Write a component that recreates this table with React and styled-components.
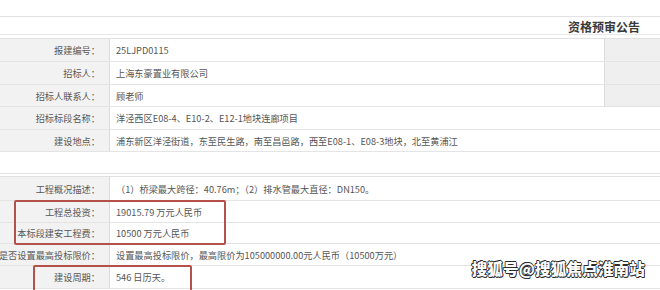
import React from 'react'
import styled, { createGlobalStyle } from 'styled-components'

const GlobalStyle = createGlobalStyle`
  html, body {
    margin: 0;
    padding: 0;
    background: #ffffff;
  }
  body {
    font-family: "Noto Sans CJK SC", "Noto Sans", sans-serif;
  }
`;

const Page = styled.div`
    position: relative;
    width: 660px;
    height: 290px;
    overflow: hidden;
    background: #ffffff;
`;

const TopStrip = styled.div`
    height: 16px;
    border-bottom: 1px solid #e2e2e2;
`;

const TitleBar = styled.div`
    height: 17px;
    display: flex;
    justify-content: flex-end;
    align-items: flex-end;
    padding-right: 20px;
    border-bottom: 1px solid #e8e8e8;
    margin-bottom: 3px;
`;

const Title = styled.div`
    font-size: 12px;
    line-height: 12px;
    font-weight: 700;
    color: #3a3a3a;
    margin-bottom: 1px;
`;

const Table = styled.div`
    display: flex;
    flex-direction: column;
    border-top: 1px solid #e0e0e0;
`;

const Gap = styled.div`
    height: 21px;
    border-bottom: 1px solid #e2e2e2;
    margin-bottom: 2px;
`;

const Row = styled.div`
    display: grid;
    grid-template-columns: ${({ $side }) => ($side ? '110px 1fr 56px' : '110px 1fr')};
    height: ${({ $h }) => $h}px;
    border-bottom: 1px solid #e4e4e4;
    box-sizing: border-box;
`;

const Label = styled.div`
    display: flex;
    align-items: center;
    justify-content: flex-end;
    padding-right: 9px;
    background: #f2f2f2;
    border-right: 1px solid #dadada;
    font-size: 9.2px;
    color: #585858;
    white-space: nowrap;
`;

const Value = styled.div`
    display: flex;
    align-items: center;
    padding-left: 6px;
    font-size: 9.2px;
    color: #555555;
    white-space: nowrap;
`;

const Side = styled.div`
    background: #efefef;
    border-left: 1px solid #dcdcdc;
`;

const Mark = styled.div`
    position: absolute;
    left: ${({ $x }) => $x}px;
    top: ${({ $y }) => $y}px;
    width: ${({ $w }) => $w}px;
    height: ${({ $h }) => $h}px;
    border: 2.5px solid #b4514a;
    border-radius: 2px;
    box-sizing: border-box;
`;

const Watermark = styled.div`
    position: absolute;
    right: 15px;
    bottom: 11px;
    font-size: 15.5px;
    font-weight: 900;
    color: #ffffff;
    letter-spacing: 0.2px;
    text-shadow: 0.8px 0 0 #2b2b2b, -0.8px 0 0 #2b2b2b, 0 0.8px 0 #2b2b2b, 0 -0.8px 0 #2b2b2b,
        0.6px 0.6px 0 #2b2b2b, -0.6px -0.6px 0 #2b2b2b;
`;

const first = [
    { label: '报建编号：', value: '25LJPD0115', h: 23, side: true },
    { label: '招标人：', value: '上海东豪置业有限公司', h: 23, side: true },
    { label: '招标人联系人：', value: '顾老师', h: 22, side: true },
    { label: '招标标段名称：', value: '洋泾西区E08-4、E10-2、E12-1地块连廊项目', h: 23 },
    { label: '建设地点：', value: '浦东新区洋泾街道，东至民生路，南至昌邑路，西至E08-1、E08-3地块，北至黄浦江', h: 22 },
];

const second = [
    { label: '工程概况描述：', value: '（1）桥梁最大跨径：40.76m；（2）排水管最大直径：DN150。', h: 24 },
    { label: '工程总投资：', value: '19015.79 万元人民币', h: 22 },
    { label: '本标段建安工程费：', value: '10500 万元人民币', h: 21 },
    { label: '是否设置最高投标限价：', value: '设置最高投标限价，最高限价为105000000.00元人民币（10500万元）', h: 22 },
    { label: '建设周期：', value: '546 日历天。', h: 23 },
];

const App = () => {
  return (
    <Page>
        <GlobalStyle />
        <TopStrip />
        <TitleBar>
            <Title>资格预审公告</Title>
        </TitleBar>
        <Table>
            {first.map((r) => (
                <Row key={r.label} $h={r.h} $side={r.side}>
                    <Label>{r.label}</Label>
                    <Value>{r.value}</Value>
                    {r.side && <Side />}
                </Row>
            ))}
        </Table>
        <Gap />
        <Table>
            {second.map((r) => (
                <Row key={r.label} $h={r.h}>
                    <Label>{r.label}</Label>
                    <Value>{r.value}</Value>
                </Row>
            ))}
        </Table>
        <Mark $x={14} $y={200} $w={212} $h={45} />
        <Mark $x={33} $y={265} $w={159} $h={32} />
        <Watermark>搜狐号@搜狐焦点淮南站</Watermark>
    </Page>
  )
}

export default App
